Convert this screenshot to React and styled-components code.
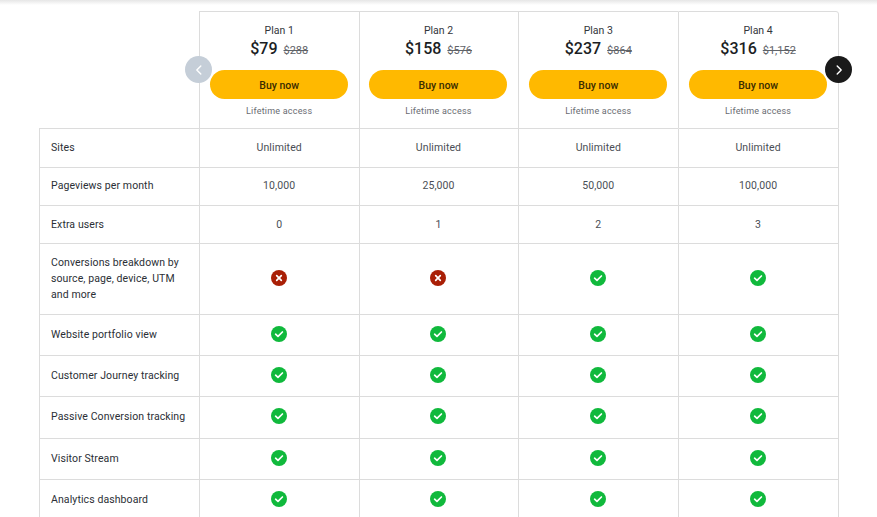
import React from "react";
import styled, { createGlobalStyle } from "styled-components";

const GlobalStyle = createGlobalStyle`
  html, body {
    margin: 0;
    padding: 0;
    height: 517px;
    overflow: hidden;
    background: #fff;
    font-family: Roboto, "Liberation Sans", sans-serif;
    color: #2b2f36;
  }
`;

const Page = styled.div`
  position: relative;
  height: 517px;
  overflow: hidden;
  padding: 11px 0 0 39px;
  box-sizing: border-box;
`;

const TopShadow = styled.div`
  position: absolute;
  top: 0;
  left: 0;
  right: 0;
  height: 5px;
  background: linear-gradient(#e6e6e6, #ffffff);
`;

const Table = styled.div`
  position: relative;
  width: 800px;
`;

const Row = styled.div`
  display: grid;
  grid-template-columns: repeat(4, 159.8px) 1fr;
  height: ${(p) => p.$h}px;
  box-sizing: border-box;
`;

const Blank = styled.div`
  border-bottom: 1px solid #dcdcdc;
`;

const PlanCell = styled.div`
  display: flex;
  flex-direction: column;
  align-items: center;
  border-top: 1px solid #dcdcdc;
  border-left: 1px solid #dcdcdc;
  border-bottom: 1px solid #dcdcdc;
  border-right: ${(p) => (p.$last ? "1px solid #dcdcdc" : "none")};
  border-top-right-radius: ${(p) => (p.$last ? "3px" : "0")};
  padding: 12px ${(p) => (p.$first ? 0 : 1)}px 0 0;
  box-sizing: border-box;
`;

const PlanName = styled.div`
  font-size: 10.5px;
  line-height: 13px;
  color: #33363b;
`;

const PriceLine = styled.div`
  display: flex;
  align-items: baseline;
  gap: 6px;
  margin-top: 2px;
  height: 20px;
`;

const Price = styled.span`
  font-size: 16px;
  line-height: 20px;
  font-weight: 500;
  color: #1b1e24;
`;

const OldPrice = styled.span`
  font-size: 11px;
  color: #5f6368;
  text-decoration: line-through;
`;

const BuyButton = styled.button`
  width: 138px;
  height: 29px;
  margin-top: 11px;
  border: none;
  border-radius: 15px;
  background: #ffb900;
  color: #3a2c00;
  font-family: inherit;
  font-size: 10.5px;
  font-weight: 500;
  padding: 2px 0 0;
`;

const Lifetime = styled.div`
  margin-top: 6px;
  font-size: 9px;
  line-height: 12px;
  letter-spacing: 0.2px;
  color: #696c72;
`;

const Label = styled.div`
  display: flex;
  align-items: center;
  padding: 0 11px ${(p) => p.$lift}px;
  border-left: 1px solid #dcdcdc;
  border-bottom: 1px solid #dcdcdc;
  font-size: 10.5px;
  line-height: 16px;
  letter-spacing: 0.1px;
  color: #2b2f36;
  box-sizing: border-box;
`;

const Value = styled.div`
  display: flex;
  align-items: center;
  justify-content: center;
  padding: 0 ${(p) => (p.$first ? 0 : 1)}px ${(p) => p.$lift}px 0;
  border-left: 1px solid #dcdcdc;
  border-bottom: 1px solid #dcdcdc;
  border-right: ${(p) => (p.$last ? "1px solid #dcdcdc" : "none")};
  font-size: 10.5px;
  line-height: 16px;
  letter-spacing: 0.1px;
  color: #4a4e55;
  box-sizing: border-box;
`;

const Arrow = styled.button`
  position: absolute;
  top: 45px;
  left: ${(p) => p.$left}px;
  width: 27px;
  height: 27px;
  padding: 0;
  border: none;
  border-radius: 50%;
  background: ${(p) => (p.$dark ? "#1a1a1a" : "#c5ced8")};
  display: flex;
  align-items: center;
  justify-content: center;
`;

const plans = [
  { name: "Plan 1", price: "$79", old: "$288" },
  { name: "Plan 2", price: "$158", old: "$576" },
  { name: "Plan 3", price: "$237", old: "$864" },
  { name: "Plan 4", price: "$316", old: "$1,152" },
];

const yes4 = [true, true, true, true];

const rows = [
  { label: "Sites", h: 39, lift: 0, values: ["Unlimited", "Unlimited", "Unlimited", "Unlimited"] },
  { label: "Pageviews per month", h: 38, lift: 1, values: ["10,000", "25,000", "50,000", "100,000"] },
  { label: "Extra users", h: 38, lift: 0, values: ["0", "1", "2", "3"] },
  { label: "Conversions breakdown by source, page, device, UTM and more", h: 71, lift: 0, values: [false, false, true, true] },
  { label: "Website portfolio view", h: 41, lift: 0, values: yes4 },
  { label: "Customer Journey tracking", h: 41, lift: 0, values: yes4 },
  { label: "Passive Conversion tracking", h: 42, lift: 1, values: yes4 },
  { label: "Visitor Stream", h: 41, lift: 0, values: yes4 },
  { label: "Analytics dashboard", h: 41, lift: 0, values: yes4 },
];

function Check() {
  return (
    <svg width="16" height="16" viewBox="0 0 16 16">
      <circle cx="8" cy="8" r="8" fill="#10b93c" />
      <path d="M4.6 8.2 7 10.4 11.4 6" fill="none" stroke="#fff" strokeWidth="1.7" strokeLinecap="round" strokeLinejoin="round" />
    </svg>
  );
}

function Cross() {
  return (
    <svg width="16" height="16" viewBox="0 0 16 16">
      <circle cx="8" cy="8" r="8" fill="#a91f06" />
      <path d="M5.7 5.7 10.3 10.3M10.3 5.7 5.7 10.3" fill="none" stroke="#fff" strokeWidth="1.7" strokeLinecap="round" />
    </svg>
  );
}

function Chevron({ left }) {
  return (
    <svg width="12" height="12" viewBox="0 0 12 12">
      <path d={left ? "M7.8 2 3.8 6l4 4" : "M4.2 2l4 4-4 4"} fill="none" stroke="#fff" strokeWidth="1.4" strokeLinecap="round" strokeLinejoin="round" />
    </svg>
  );
}

export default function App() {
  return (
    <>
      <GlobalStyle />
      <Page>
        <TopShadow />
        <Table>
          <Row $h={118}>
            <Blank />
            {plans.map((plan, i) => (
              <PlanCell key={plan.name} $first={i === 0} $last={i === plans.length - 1}>
                <PlanName>{plan.name}</PlanName>
                <PriceLine>
                  <Price>{plan.price}</Price>
                  <OldPrice>{plan.old}</OldPrice>
                </PriceLine>
                <BuyButton>Buy now</BuyButton>
                <Lifetime>Lifetime access</Lifetime>
              </PlanCell>
            ))}
          </Row>
          {rows.map((row) => (
            <Row key={row.label} $h={row.h}>
              <Label $lift={row.lift}>{row.label}</Label>
              {row.values.map((v, i) => (
                <Value key={i} $first={i === 0} $last={i === 3} $lift={typeof v === "boolean" ? 3 : row.lift}>
                  {v === true ? <Check /> : v === false ? <Cross /> : v}
                </Value>
              ))}
            </Row>
          ))}
          <Arrow $left={146}>
            <Chevron left />
          </Arrow>
          <Arrow $left={786} $dark>
            <Chevron />
          </Arrow>
        </Table>
      </Page>
    </>
  );
}
